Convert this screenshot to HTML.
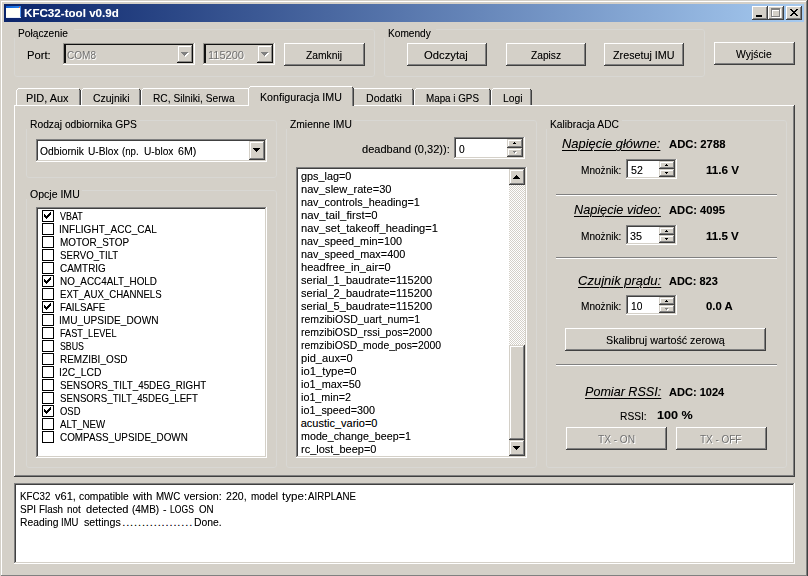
<!doctype html>
<html><head><meta charset="utf-8"><title>KFC32-tool v0.9d</title><style>
html,body{margin:0;padding:0}
body{width:808px;height:576px;background:#D4D0C8;position:relative;overflow:hidden;font-family:"Liberation Sans",sans-serif}
div,span,svg{position:absolute}
.sk{box-shadow:inset -1px -1px 0 #fff,inset 1px 1px 0 #808080,inset -2px -2px 0 #D4D0C8,inset 2px 2px 0 #404040}
.rs{background:#D4D0C8;box-shadow:inset -1px -1px 0 #404040,inset 1px 1px 0 #fff,inset -2px -2px 0 #808080,inset 2px 2px 0 #D4D0C8}
.rs2{background:#D4D0C8;box-shadow:inset -1px -1px 0 #404040,inset 1px 1px 0 #D4D0C8,inset -2px -2px 0 #808080,inset 2px 2px 0 #fff}
.skd{background:#D4D0C8;box-shadow:inset -1px -1px 0 #fff,inset 1px 1px 0 #9A9892,inset -2px -2px 0 #D4D0C8,inset 2px 2px 0 #101010}
.rs2d{background:#D4D0C8;box-shadow:inset -1px -1px 0 #101010,inset 1px 1px 0 #D4D0C8,inset -2px -2px 0 #8A8884,inset 2px 2px 0 #fff}
.chk{background:conic-gradient(#fff 25%,#D4D0C8 0 50%,#fff 0 75%,#D4D0C8 0) 0 0/2px 2px}
.t{white-space:pre;font-size:11px;line-height:13px;height:13px;color:#000;transform-origin:0 0;text-shadow:0 0 0 rgba(0,0,0,.35)}
.b,.title{font-weight:bold}
.title{color:#fff;text-shadow:0 0 0 rgba(255,255,255,.35)}
.dis{color:#707070;text-shadow:1px 1px 0 #fff}
.i13{font-size:13px;font-style:italic;line-height:16px;height:16px;text-decoration:underline;text-decoration-thickness:1px;text-underline-offset:2px}
</style></head><body>
<div class="" style="left:1px;top:1px;width:805px;height:1px;background:#fff"></div>
<div class="" style="left:1px;top:1px;width:1px;height:574px;background:#fff"></div>
<div class="" style="left:806px;top:1px;width:1px;height:575px;background:#808080"></div>
<div class="" style="left:807px;top:0px;width:1px;height:576px;background:#404040"></div>
<div class="" style="left:1px;top:575px;width:806px;height:1px;background:#808080"></div>
<div class="" style="left:4px;top:4px;width:800px;height:18px;background:linear-gradient(to right,#0A246A,#A6CAF0)"></div>
<div class="" style="left:6px;top:6px;width:15px;height:12px;background:#FFFFF7"></div>
<div class="" style="left:6px;top:6px;width:15px;height:2px;background:linear-gradient(to right,#0A5FD8,#2E86F0)"></div>
<div class="" style="left:20px;top:8px;width:1px;height:10px;background:#4F8FE8"></div>
<div class="" style="left:6px;top:17px;width:15px;height:1px;background:#E8EEF8"></div>
<div class="" style="left:19px;top:7px;width:1px;height:1px;background:#F07030"></div>
<div class="rs" style="left:752px;top:6px;width:16px;height:14px;"></div>
<div class="" style="left:756px;top:15px;width:6px;height:2px;background:#000"></div>
<div class="rs" style="left:768px;top:6px;width:16px;height:14px;"></div>
<div class="" style="left:772px;top:9px;width:9px;height:9px;border:1px solid #fff;border-top-width:2px;box-sizing:border-box"></div>
<div class="" style="left:771px;top:8px;width:9px;height:9px;border:1px solid #808080;border-top-width:2px;box-sizing:border-box"></div>
<div class="rs" style="left:786px;top:6px;width:16px;height:14px;"></div>
<svg style="position:absolute;left:790px;top:9px" width="8" height="7" shape-rendering="crispEdges"><path d="M0 0h2v1h-2zM6 0h2v1h-2zM1 1h2v1h-2zM5 1h2v1h-2zM2 2h4v1h-4zM3 3h2v1h-2zM2 4h4v1h-4zM1 5h2v1h-2zM5 5h2v1h-2zM0 6h2v1h-2zM6 6h2v1h-2z" fill="#000"/></svg>
<div class="" style="left:14px;top:29px;width:361px;height:48px;border:1px solid #D8D7D3;border-radius:3px;box-sizing:border-box"></div>
<div class="" style="left:14px;top:27px;width:60px;height:11px;background:#D4D0C8"></div>
<div class="" style="left:384px;top:29px;width:321px;height:48px;border:1px solid #D8D7D3;border-radius:3px;box-sizing:border-box"></div>
<div class="" style="left:384px;top:27px;width:52px;height:11px;background:#D4D0C8"></div>
<div class="skd" style="left:63px;top:43px;width:132px;height:22px;"></div>
<div class="" style="left:65px;top:45px;width:1px;height:18px;background:#101010"></div>
<div class="rs2d" style="left:177px;top:45px;width:16px;height:18px;"></div>
<div class="" style="left:182px;top:53px;width:7px;height:1px;background:#fff"></div>
<div class="" style="left:183px;top:54px;width:5px;height:1px;background:#fff"></div>
<div class="" style="left:184px;top:55px;width:3px;height:1px;background:#fff"></div>
<div class="" style="left:185px;top:56px;width:1px;height:1px;background:#fff"></div>
<div class="" style="left:181px;top:52px;width:7px;height:1px;background:#808080"></div>
<div class="" style="left:182px;top:53px;width:5px;height:1px;background:#808080"></div>
<div class="" style="left:183px;top:54px;width:3px;height:1px;background:#808080"></div>
<div class="" style="left:184px;top:55px;width:1px;height:1px;background:#808080"></div>
<div class="skd" style="left:203px;top:43px;width:72px;height:22px;"></div>
<div class="" style="left:205px;top:45px;width:1px;height:18px;background:#101010"></div>
<div class="rs2d" style="left:257px;top:45px;width:16px;height:18px;"></div>
<div class="" style="left:262px;top:53px;width:7px;height:1px;background:#fff"></div>
<div class="" style="left:263px;top:54px;width:5px;height:1px;background:#fff"></div>
<div class="" style="left:264px;top:55px;width:3px;height:1px;background:#fff"></div>
<div class="" style="left:265px;top:56px;width:1px;height:1px;background:#fff"></div>
<div class="" style="left:261px;top:52px;width:7px;height:1px;background:#808080"></div>
<div class="" style="left:262px;top:53px;width:5px;height:1px;background:#808080"></div>
<div class="" style="left:263px;top:54px;width:3px;height:1px;background:#808080"></div>
<div class="" style="left:264px;top:55px;width:1px;height:1px;background:#808080"></div>
<div class="rs" style="left:284px;top:43px;width:81px;height:23px;"></div>
<div class="rs" style="left:407px;top:43px;width:80px;height:23px;"></div>
<div class="rs" style="left:506px;top:43px;width:80px;height:23px;"></div>
<div class="rs" style="left:604px;top:43px;width:80px;height:23px;"></div>
<div class="rs" style="left:714px;top:42px;width:81px;height:23px;"></div>
<div class="" style="left:14px;top:105px;width:780px;height:1px;background:#fff"></div>
<div class="" style="left:14px;top:105px;width:1px;height:371px;background:#fff"></div>
<div class="" style="left:793px;top:106px;width:1px;height:370px;background:#808080"></div>
<div class="" style="left:794px;top:105px;width:1px;height:372px;background:#404040"></div>
<div class="" style="left:15px;top:475px;width:779px;height:1px;background:#808080"></div>
<div class="" style="left:14px;top:476px;width:781px;height:1px;background:#404040"></div>
<div class="" style="left:18px;top:88px;width:61px;height:1px;background:#fff"></div>
<div class="" style="left:17px;top:89px;width:1px;height:1px;background:#fff"></div>
<div class="" style="left:16px;top:90px;width:1px;height:15px;background:#fff"></div>
<div class="" style="left:79px;top:90px;width:1px;height:15px;background:#808080"></div>
<div class="" style="left:80px;top:90px;width:1px;height:15px;background:#404040"></div>
<div class="" style="left:79px;top:89px;width:1px;height:1px;background:#404040"></div>
<div class="" style="left:83px;top:88px;width:56px;height:1px;background:#fff"></div>
<div class="" style="left:82px;top:89px;width:1px;height:1px;background:#fff"></div>
<div class="" style="left:81px;top:90px;width:1px;height:15px;background:#fff"></div>
<div class="" style="left:139px;top:90px;width:1px;height:15px;background:#808080"></div>
<div class="" style="left:140px;top:90px;width:1px;height:15px;background:#404040"></div>
<div class="" style="left:139px;top:89px;width:1px;height:1px;background:#404040"></div>
<div class="" style="left:143px;top:88px;width:105px;height:1px;background:#fff"></div>
<div class="" style="left:142px;top:89px;width:1px;height:1px;background:#fff"></div>
<div class="" style="left:141px;top:90px;width:1px;height:15px;background:#fff"></div>
<div class="" style="left:248px;top:90px;width:1px;height:15px;background:#808080"></div>
<div class="" style="left:249px;top:90px;width:1px;height:15px;background:#404040"></div>
<div class="" style="left:248px;top:89px;width:1px;height:1px;background:#404040"></div>
<div class="" style="left:354px;top:88px;width:58px;height:1px;background:#fff"></div>
<div class="" style="left:353px;top:89px;width:1px;height:1px;background:#fff"></div>
<div class="" style="left:352px;top:90px;width:1px;height:15px;background:#fff"></div>
<div class="" style="left:412px;top:90px;width:1px;height:15px;background:#808080"></div>
<div class="" style="left:413px;top:90px;width:1px;height:15px;background:#404040"></div>
<div class="" style="left:412px;top:89px;width:1px;height:1px;background:#404040"></div>
<div class="" style="left:416px;top:88px;width:73px;height:1px;background:#fff"></div>
<div class="" style="left:415px;top:89px;width:1px;height:1px;background:#fff"></div>
<div class="" style="left:414px;top:90px;width:1px;height:15px;background:#fff"></div>
<div class="" style="left:489px;top:90px;width:1px;height:15px;background:#808080"></div>
<div class="" style="left:490px;top:90px;width:1px;height:15px;background:#404040"></div>
<div class="" style="left:489px;top:89px;width:1px;height:1px;background:#404040"></div>
<div class="" style="left:493px;top:88px;width:37px;height:1px;background:#fff"></div>
<div class="" style="left:492px;top:89px;width:1px;height:1px;background:#fff"></div>
<div class="" style="left:491px;top:90px;width:1px;height:15px;background:#fff"></div>
<div class="" style="left:530px;top:90px;width:1px;height:15px;background:#808080"></div>
<div class="" style="left:531px;top:90px;width:1px;height:15px;background:#404040"></div>
<div class="" style="left:530px;top:89px;width:1px;height:1px;background:#404040"></div>
<div class="" style="left:248px;top:86px;width:106px;height:20px;background:#D4D0C8"></div>
<div class="" style="left:250px;top:86px;width:102px;height:1px;background:#fff"></div>
<div class="" style="left:249px;top:87px;width:1px;height:1px;background:#fff"></div>
<div class="" style="left:248px;top:88px;width:1px;height:18px;background:#fff"></div>
<div class="" style="left:352px;top:88px;width:1px;height:18px;background:#808080"></div>
<div class="" style="left:353px;top:88px;width:1px;height:18px;background:#404040"></div>
<div class="" style="left:352px;top:87px;width:1px;height:1px;background:#404040"></div>
<div class="" style="left:249px;top:105px;width:103px;height:1px;background:#D4D0C8"></div>
<div class="" style="left:26px;top:120px;width:251px;height:58px;border:1px solid #D8D7D3;border-radius:3px;box-sizing:border-box"></div>
<div class="" style="left:26px;top:118px;width:113px;height:11px;background:#D4D0C8"></div>
<div class="" style="left:26px;top:190px;width:251px;height:278px;border:1px solid #D8D7D3;border-radius:3px;box-sizing:border-box"></div>
<div class="" style="left:26px;top:188px;width:56px;height:11px;background:#D4D0C8"></div>
<div class="" style="left:286px;top:120px;width:251px;height:348px;border:1px solid #D8D7D3;border-radius:3px;box-sizing:border-box"></div>
<div class="" style="left:286px;top:118px;width:68px;height:11px;background:#D4D0C8"></div>
<div class="" style="left:546px;top:120px;width:241px;height:348px;border:1px solid #D8D7D3;border-radius:3px;box-sizing:border-box"></div>
<div class="" style="left:546px;top:118px;width:76px;height:11px;background:#D4D0C8"></div>
<div class="sk" style="left:36px;top:139px;width:231px;height:23px;background:#fff"></div>
<div class="rs2" style="left:249px;top:141px;width:16px;height:19px;"></div>
<div class="" style="left:253px;top:148px;width:7px;height:1px;background:#000"></div>
<div class="" style="left:254px;top:149px;width:5px;height:1px;background:#000"></div>
<div class="" style="left:255px;top:150px;width:3px;height:1px;background:#000"></div>
<div class="" style="left:256px;top:151px;width:1px;height:1px;background:#000"></div>
<div class="sk" style="left:36px;top:207px;width:231px;height:251px;background:#fff"></div>
<div class="" style="left:42px;top:210px;width:12px;height:12px;border:1px solid #000;box-sizing:border-box;background:#fff"></div>
<svg style="position:absolute;left:44px;top:212px" width="7" height="7" shape-rendering="crispEdges"><path d="M0 2v3h1v1h1v1h1v-1h1v-1h1v-1h1v-1h1v-3h-1v1h-1v1h-1v1h-1v1h-1v-1h-1v-1z" fill="#000"/></svg>
<div class="" style="left:42px;top:223px;width:12px;height:12px;border:1px solid #000;box-sizing:border-box;background:#fff"></div>
<div class="" style="left:42px;top:236px;width:12px;height:12px;border:1px solid #000;box-sizing:border-box;background:#fff"></div>
<div class="" style="left:42px;top:249px;width:12px;height:12px;border:1px solid #000;box-sizing:border-box;background:#fff"></div>
<div class="" style="left:42px;top:262px;width:12px;height:12px;border:1px solid #000;box-sizing:border-box;background:#fff"></div>
<div class="" style="left:42px;top:275px;width:12px;height:12px;border:1px solid #000;box-sizing:border-box;background:#fff"></div>
<svg style="position:absolute;left:44px;top:277px" width="7" height="7" shape-rendering="crispEdges"><path d="M0 2v3h1v1h1v1h1v-1h1v-1h1v-1h1v-1h1v-3h-1v1h-1v1h-1v1h-1v1h-1v-1h-1v-1z" fill="#000"/></svg>
<div class="" style="left:42px;top:288px;width:12px;height:12px;border:1px solid #000;box-sizing:border-box;background:#fff"></div>
<div class="" style="left:42px;top:301px;width:12px;height:12px;border:1px solid #000;box-sizing:border-box;background:#fff"></div>
<svg style="position:absolute;left:44px;top:303px" width="7" height="7" shape-rendering="crispEdges"><path d="M0 2v3h1v1h1v1h1v-1h1v-1h1v-1h1v-1h1v-3h-1v1h-1v1h-1v1h-1v1h-1v-1h-1v-1z" fill="#000"/></svg>
<div class="" style="left:42px;top:314px;width:12px;height:12px;border:1px solid #000;box-sizing:border-box;background:#fff"></div>
<div class="" style="left:42px;top:327px;width:12px;height:12px;border:1px solid #000;box-sizing:border-box;background:#fff"></div>
<div class="" style="left:42px;top:340px;width:12px;height:12px;border:1px solid #000;box-sizing:border-box;background:#fff"></div>
<div class="" style="left:42px;top:353px;width:12px;height:12px;border:1px solid #000;box-sizing:border-box;background:#fff"></div>
<div class="" style="left:42px;top:366px;width:12px;height:12px;border:1px solid #000;box-sizing:border-box;background:#fff"></div>
<div class="" style="left:42px;top:379px;width:12px;height:12px;border:1px solid #000;box-sizing:border-box;background:#fff"></div>
<div class="" style="left:42px;top:392px;width:12px;height:12px;border:1px solid #000;box-sizing:border-box;background:#fff"></div>
<div class="" style="left:42px;top:405px;width:12px;height:12px;border:1px solid #000;box-sizing:border-box;background:#fff"></div>
<svg style="position:absolute;left:44px;top:407px" width="7" height="7" shape-rendering="crispEdges"><path d="M0 2v3h1v1h1v1h1v-1h1v-1h1v-1h1v-1h1v-3h-1v1h-1v1h-1v1h-1v1h-1v-1h-1v-1z" fill="#000"/></svg>
<div class="" style="left:42px;top:418px;width:12px;height:12px;border:1px solid #000;box-sizing:border-box;background:#fff"></div>
<div class="" style="left:42px;top:431px;width:12px;height:12px;border:1px solid #000;box-sizing:border-box;background:#fff"></div>
<div class="sk" style="left:454px;top:137px;width:71px;height:22px;background:#fff"></div>
<div class="rs2" style="left:507px;top:139px;width:16px;height:9px;"></div>
<div class="rs2" style="left:507px;top:148px;width:16px;height:9px;"></div>
<div class="" style="left:514px;top:142px;width:1px;height:1px;background:#000"></div>
<div class="" style="left:513px;top:143px;width:3px;height:1px;background:#000"></div>
<div class="" style="left:514px;top:152px;width:3px;height:1px;background:#fff"></div>
<div class="" style="left:515px;top:153px;width:1px;height:1px;background:#fff"></div>
<div class="" style="left:513px;top:151px;width:3px;height:1px;background:#808080"></div>
<div class="" style="left:514px;top:152px;width:1px;height:1px;background:#808080"></div>
<div class="sk" style="left:296px;top:167px;width:231px;height:291px;background:#fff"></div>
<div class="chk" style="left:509px;top:169px;width:16px;height:287px;"></div>
<div class="rs2" style="left:509px;top:169px;width:16px;height:16px;"></div>
<div class="" style="left:516px;top:175px;width:1px;height:1px;background:#000"></div>
<div class="" style="left:515px;top:176px;width:3px;height:1px;background:#000"></div>
<div class="" style="left:514px;top:177px;width:5px;height:1px;background:#000"></div>
<div class="" style="left:513px;top:178px;width:7px;height:1px;background:#000"></div>
<div class="rs2" style="left:509px;top:440px;width:16px;height:16px;"></div>
<div class="" style="left:513px;top:446px;width:7px;height:1px;background:#000"></div>
<div class="" style="left:514px;top:447px;width:5px;height:1px;background:#000"></div>
<div class="" style="left:515px;top:448px;width:3px;height:1px;background:#000"></div>
<div class="" style="left:516px;top:449px;width:1px;height:1px;background:#000"></div>
<div class="rs2" style="left:509px;top:345px;width:16px;height:95px;"></div>
<div class="sk" style="left:626px;top:159px;width:51px;height:20px;background:#fff"></div>
<div class="rs2" style="left:659px;top:161px;width:16px;height:8px;"></div>
<div class="rs2" style="left:659px;top:169px;width:16px;height:8px;"></div>
<div class="" style="left:666px;top:164px;width:1px;height:1px;background:#000"></div>
<div class="" style="left:665px;top:165px;width:3px;height:1px;background:#000"></div>
<div class="" style="left:665px;top:172px;width:3px;height:1px;background:#000"></div>
<div class="" style="left:666px;top:173px;width:1px;height:1px;background:#000"></div>
<div class="sk" style="left:626px;top:225px;width:51px;height:20px;background:#fff"></div>
<div class="rs2" style="left:659px;top:227px;width:16px;height:8px;"></div>
<div class="rs2" style="left:659px;top:235px;width:16px;height:8px;"></div>
<div class="" style="left:666px;top:230px;width:1px;height:1px;background:#000"></div>
<div class="" style="left:665px;top:231px;width:3px;height:1px;background:#000"></div>
<div class="" style="left:665px;top:238px;width:3px;height:1px;background:#000"></div>
<div class="" style="left:666px;top:239px;width:1px;height:1px;background:#000"></div>
<div class="sk" style="left:626px;top:295px;width:51px;height:20px;background:#fff"></div>
<div class="rs2" style="left:659px;top:297px;width:16px;height:8px;"></div>
<div class="rs2" style="left:659px;top:305px;width:16px;height:8px;"></div>
<div class="" style="left:666px;top:300px;width:1px;height:1px;background:#000"></div>
<div class="" style="left:665px;top:301px;width:3px;height:1px;background:#000"></div>
<div class="" style="left:666px;top:309px;width:3px;height:1px;background:#fff"></div>
<div class="" style="left:667px;top:310px;width:1px;height:1px;background:#fff"></div>
<div class="" style="left:665px;top:308px;width:3px;height:1px;background:#808080"></div>
<div class="" style="left:666px;top:309px;width:1px;height:1px;background:#808080"></div>
<div class="" style="left:556px;top:194px;width:221px;height:1px;background:#808080"></div>
<div class="" style="left:556px;top:195px;width:221px;height:1px;background:#fff"></div>
<div class="" style="left:556px;top:257px;width:221px;height:1px;background:#808080"></div>
<div class="" style="left:556px;top:258px;width:221px;height:1px;background:#fff"></div>
<div class="" style="left:556px;top:364px;width:221px;height:1px;background:#808080"></div>
<div class="" style="left:556px;top:365px;width:221px;height:1px;background:#fff"></div>
<div class="rs" style="left:565px;top:328px;width:201px;height:23px;"></div>
<div class="rs" style="left:566px;top:427px;width:101px;height:23px;"></div>
<div class="rs" style="left:676px;top:427px;width:91px;height:23px;"></div>
<div class="sk" style="left:14px;top:483px;width:781px;height:81px;background:#fff"></div>
<span class="t title" style="left:24.00px;top:7px;transform:scaleX(1.0556)">KFC32-tool v0.9d</span>
<span class="t n" style="left:18.00px;top:27px;transform:scaleX(0.9259)">Połączenie</span>
<span class="t n" style="left:27.30px;top:49px;transform:scaleX(1.0217)">Port:</span>
<span class="t dis" style="left:67.40px;top:49px;transform:scaleX(0.9125)">COM8</span>
<span class="t dis" style="left:207.60px;top:49px;transform:scaleX(1.0029)">115200</span>
<span class="t n" style="left:305.70px;top:49px;transform:scaleX(0.9368)">Zamknij</span>
<span class="t n" style="left:387.60px;top:27px;transform:scaleX(0.9213)">Komendy</span>
<span class="t n" style="left:424.30px;top:49px;transform:scaleX(1.0238)">Odczytaj</span>
<span class="t n" style="left:530.70px;top:49px;transform:scaleX(0.9281)">Zapisz</span>
<span class="t n" style="left:612.90px;top:49px;transform:scaleX(0.9778)">Zresetuj IMU</span>
<span class="t n" style="left:736.20px;top:48px;transform:scaleX(0.9447)">Wyjście</span>
<span class="t n" style="left:25.60px;top:92px;transform:scaleX(0.9953)">PID, Aux</span>
<span class="t n" style="left:92.80px;top:92px;transform:scaleX(0.9500)">Czujniki</span>
<span class="t n" style="left:153.00px;top:92px;transform:scaleX(0.9273)">RC, Silniki, Serwa</span>
<span class="t n" style="left:260.00px;top:91px;transform:scaleX(0.9702)">Konfiguracja IMU</span>
<span class="t n" style="left:366.00px;top:92px;transform:scaleX(0.9622)">Dodatki</span>
<span class="t n" style="left:426.00px;top:92px;transform:scaleX(0.8932)">Mapa i GPS</span>
<span class="t n" style="left:502.70px;top:92px;transform:scaleX(0.9400)">Logi</span>
<span class="t n" style="left:29.70px;top:118px;transform:scaleX(0.9351)">Rodzaj odbiornika GPS</span>
<span class="t n" style="left:29.70px;top:188px;transform:scaleX(0.9577)">Opcje IMU</span>
<span class="t n" style="left:289.80px;top:118px;transform:scaleX(0.9364)">Zmienne IMU</span>
<span class="t n" style="left:550.00px;top:118px;transform:scaleX(0.9324)">Kalibracja ADC</span>
<span class="t n" style="left:39.50px;top:145px;transform:scaleX(0.9340)">Odbiornik</span>
<span class="t n" style="left:87.50px;top:145px;transform:scaleX(0.9273)">U-Blox</span>
<span class="t n" style="left:122.30px;top:145px;transform:scaleX(0.8789)">(np.</span>
<span class="t n" style="left:144.10px;top:145px;transform:scaleX(0.9250)">U-blox</span>
<span class="t n" style="left:177.80px;top:145px;transform:scaleX(0.9684)">6M)</span>
<span class="t n" style="left:60.00px;top:210px;transform:scaleX(0.8107)">VBAT</span>
<span class="t n" style="left:59.08px;top:223px;transform:scaleX(0.9151)">INFLIGHT_ACC_CAL</span>
<span class="t n" style="left:60.00px;top:236px;transform:scaleX(0.9013)">MOTOR_STOP</span>
<span class="t n" style="left:60.00px;top:249px;transform:scaleX(0.8788)">SERVO_TILT</span>
<span class="t n" style="left:60.00px;top:262px;transform:scaleX(0.9040)">CAMTRIG</span>
<span class="t n" style="left:60.00px;top:275px;transform:scaleX(0.8981)">NO_ACC4ALT_HOLD</span>
<span class="t n" style="left:60.00px;top:288px;transform:scaleX(0.8750)">EXT_AUX_CHANNELS</span>
<span class="t n" style="left:60.00px;top:301px;transform:scaleX(0.8804)">FAILSAFE</span>
<span class="t n" style="left:59.08px;top:314px;transform:scaleX(0.9196)">IMU_UPSIDE_DOWN</span>
<span class="t n" style="left:60.00px;top:327px;transform:scaleX(0.8338)">FAST_LEVEL</span>
<span class="t n" style="left:60.00px;top:340px;transform:scaleX(0.8000)">SBUS</span>
<span class="t n" style="left:60.00px;top:353px;transform:scaleX(0.9054)">REMZIBI_OSD</span>
<span class="t n" style="left:59.06px;top:366px;transform:scaleX(0.9409)">I2C_LCD</span>
<span class="t n" style="left:60.00px;top:379px;transform:scaleX(0.8902)">SENSORS_TILT_45DEG_RIGHT</span>
<span class="t n" style="left:60.00px;top:392px;transform:scaleX(0.8790)">SENSORS_TILT_45DEG_LEFT</span>
<span class="t n" style="left:60.00px;top:405px;transform:scaleX(0.8583)">OSD</span>
<span class="t n" style="left:60.00px;top:418px;transform:scaleX(0.8804)">ALT_NEW</span>
<span class="t n" style="left:60.00px;top:431px;transform:scaleX(0.8986)">COMPASS_UPSIDE_DOWN</span>
<span class="t n" style="left:362.00px;top:143px;transform:scaleX(1.0034)">deadband (0,32)):</span>
<span class="t n" style="left:459.00px;top:143px;transform:scaleX(0.9333)">0</span>
<span class="t n" style="left:300.70px;top:170px;transform:scaleX(0.9863)">gps_lag=0</span>
<span class="t n" style="left:300.70px;top:183px;transform:scaleX(1.0100)">nav_slew_rate=30</span>
<span class="t n" style="left:300.70px;top:196px;transform:scaleX(0.9892)">nav_controls_heading=1</span>
<span class="t n" style="left:300.70px;top:209px;transform:scaleX(1.0311)">nav_tail_first=0</span>
<span class="t n" style="left:300.70px;top:222px;transform:scaleX(1.0126)">nav_set_takeoff_heading=1</span>
<span class="t n" style="left:300.70px;top:235px;transform:scaleX(0.9863)">nav_speed_min=100</span>
<span class="t n" style="left:300.70px;top:248px;transform:scaleX(0.9887)">nav_speed_max=400</span>
<span class="t n" style="left:300.70px;top:261px;transform:scaleX(1.0090)">headfree_in_air=0</span>
<span class="t n" style="left:300.70px;top:274px;transform:scaleX(1.0062)">serial_1_baudrate=115200</span>
<span class="t n" style="left:300.70px;top:287px;transform:scaleX(1.0062)">serial_2_baudrate=115200</span>
<span class="t n" style="left:300.70px;top:300px;transform:scaleX(1.0062)">serial_5_baudrate=115200</span>
<span class="t n" style="left:300.70px;top:313px;transform:scaleX(0.9573)">remzibiOSD_uart_num=1</span>
<span class="t n" style="left:300.70px;top:326px;transform:scaleX(0.9547)">remzibiOSD_rssi_pos=2000</span>
<span class="t n" style="left:300.70px;top:339px;transform:scaleX(0.9493)">remzibiOSD_mode_pos=2000</span>
<span class="t n" style="left:300.70px;top:352px;transform:scaleX(1.0118)">pid_aux=0</span>
<span class="t n" style="left:300.70px;top:365px;transform:scaleX(1.0259)">io1_type=0</span>
<span class="t n" style="left:300.70px;top:378px;transform:scaleX(0.9933)">io1_max=50</span>
<span class="t n" style="left:300.70px;top:391px;transform:scaleX(0.9784)">io1_min=2</span>
<span class="t n" style="left:300.70px;top:404px;transform:scaleX(0.9803)">io1_speed=300</span>
<span class="t n" style="left:300.70px;top:417px;transform:scaleX(1.0000)">acustic_vario=0</span>
<span class="t n" style="left:300.70px;top:430px;transform:scaleX(0.9735)">mode_change_beep=1</span>
<span class="t n" style="left:300.70px;top:443px;transform:scaleX(0.9987)">rc_lost_beep=0</span>
<span class="t i13" style="left:562.40px;top:136px;transform:scaleX(0.9928)">Napięcie główne:</span>
<span class="t b" style="left:669.00px;top:138px;transform:scaleX(1.0255)">ADC: 2788</span>
<span class="t n" style="left:581.00px;top:164px;transform:scaleX(0.9159)">Mnożnik:</span>
<span class="t n" style="left:630.60px;top:164px;transform:scaleX(0.9667)">52</span>
<span class="t b" style="left:706.30px;top:164px;transform:scaleX(1.0613)">11.6 V</span>
<span class="t i13" style="left:574.20px;top:202px;transform:scaleX(0.9765)">Napięcie video:</span>
<span class="t b" style="left:669.20px;top:204px;transform:scaleX(1.0182)">ADC: 4095</span>
<span class="t n" style="left:581.00px;top:230px;transform:scaleX(0.9159)">Mnożnik:</span>
<span class="t n" style="left:630.20px;top:230px;transform:scaleX(0.9833)">35</span>
<span class="t b" style="left:706.30px;top:230px;transform:scaleX(1.0484)">11.5 V</span>
<span class="t i13" style="left:577.80px;top:273px;transform:scaleX(1.0011)">Czujnik prądu:</span>
<span class="t b" style="left:669.00px;top:275px;transform:scaleX(0.9980)">ADC: 823</span>
<span class="t n" style="left:581.00px;top:300px;transform:scaleX(0.9159)">Mnożnik:</span>
<span class="t n" style="left:630.57px;top:300px;transform:scaleX(0.9273)">10</span>
<span class="t b" style="left:706.00px;top:300px;transform:scaleX(1.0308)">0.0 A</span>
<span class="t n" style="left:605.75px;top:334px;transform:scaleX(0.9758)">Skalibruj wartość zerową</span>
<span class="t i13" style="left:584.60px;top:384px;transform:scaleX(0.9676)">Pomiar RSSI:</span>
<span class="t b" style="left:669.00px;top:386px;transform:scaleX(1.0036)">ADC: 1024</span>
<span class="t n" style="left:619.80px;top:410px;transform:scaleX(0.9286)">RSSI:</span>
<span class="t b" style="left:656.50px;top:409px;transform:scaleX(1.1452)">100 %</span>
<span class="t dis" style="left:598.10px;top:433px;transform:scaleX(0.9175)">TX - ON</span>
<span class="t dis" style="left:700.00px;top:433px;transform:scaleX(0.9043)">TX - OFF</span>
<span class="t n" style="left:19.90px;top:490px;transform:scaleX(0.8882)">KFC32</span>
<span class="t n" style="left:54.80px;top:490px;transform:scaleX(1.0050)">v61,</span>
<span class="t n" style="left:79.00px;top:490px;transform:scaleX(0.9340)">compatible</span>
<span class="t n" style="left:133.20px;top:490px;transform:scaleX(0.9895)">with</span>
<span class="t n" style="left:156.20px;top:490px;transform:scaleX(0.8815)">MWC</span>
<span class="t n" style="left:184.00px;top:490px;transform:scaleX(0.9789)">version:</span>
<span class="t n" style="left:225.70px;top:490px;transform:scaleX(0.9619)">220,</span>
<span class="t n" style="left:251.00px;top:490px;transform:scaleX(0.9000)">model</span>
<span class="t n" style="left:282.00px;top:490px;transform:scaleX(1.0522)">type:</span>
<span class="t n" style="left:308.00px;top:490px;transform:scaleX(0.8815)">AIRPLANE</span>
<span class="t n" style="left:19.90px;top:503px;transform:scaleX(0.9059)">SPI</span>
<span class="t n" style="left:38.80px;top:503px;transform:scaleX(0.8926)">Flash</span>
<span class="t n" style="left:67.00px;top:503px;transform:scaleX(0.8937)">not</span>
<span class="t n" style="left:85.80px;top:503px;transform:scaleX(1.0071)">detected</span>
<span class="t n" style="left:132.20px;top:503px;transform:scaleX(0.9067)">(4MB)</span>
<span class="t n" style="left:163.40px;top:503px;transform:scaleX(0.9750)">-</span>
<span class="t n" style="left:170.40px;top:503px;transform:scaleX(0.7806)">LOGS</span>
<span class="t n" style="left:198.90px;top:503px;transform:scaleX(0.8875)">ON</span>
<span class="t n" style="left:19.90px;top:516px;transform:scaleX(0.9366)">Reading</span>
<span class="t n" style="left:61.44px;top:516px;transform:scaleX(0.8632)">IMU</span>
<span class="t n" style="left:83.90px;top:516px;transform:scaleX(0.9711)">settings</span>
<span class="t" style="left:122.20px;top:516px;letter-spacing:0.882px">..................</span>
<span class="t n" style="left:193.90px;top:516px;transform:scaleX(0.9448)">Done.</span>
</body></html>
